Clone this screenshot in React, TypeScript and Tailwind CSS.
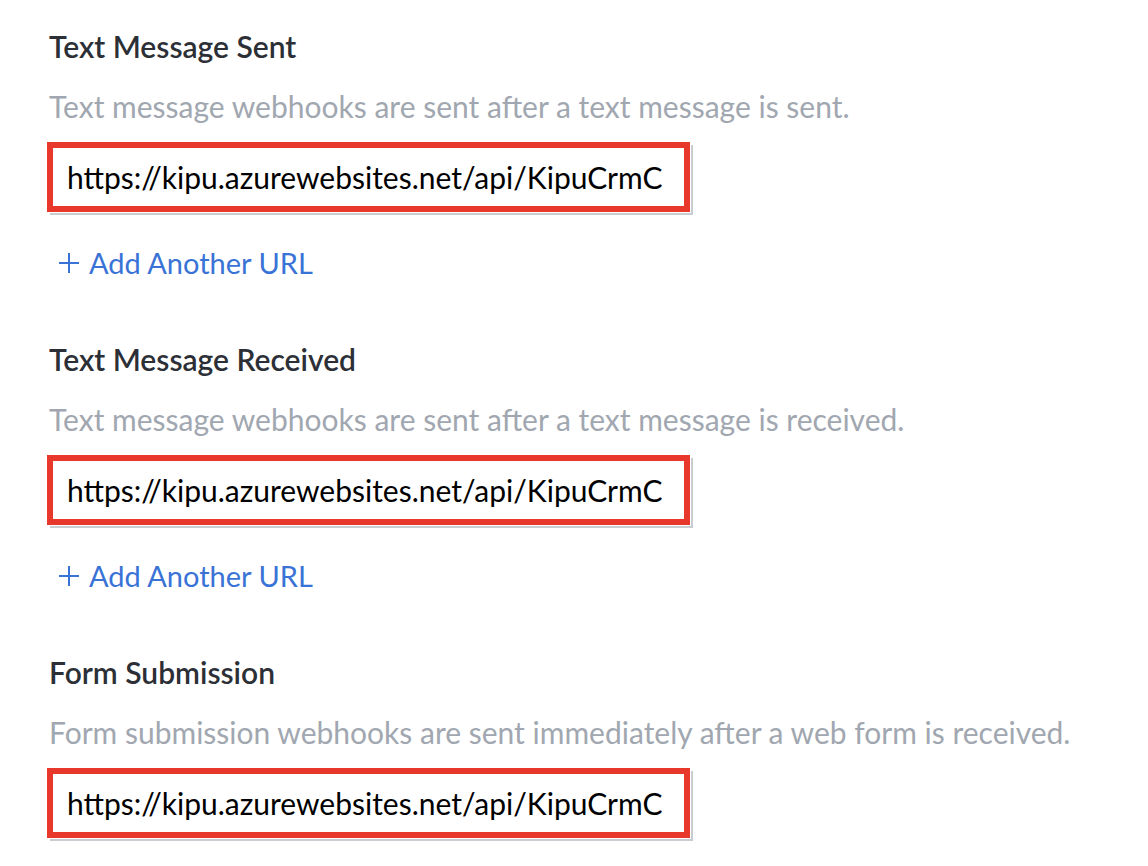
const sections = [
  {
    title: "Text Message Sent",
    description: "Text message webhooks are sent after a text message is sent.",
    addLink: true,
  },
  {
    title: "Text Message Received",
    description: "Text message webhooks are sent after a text message is received.",
    addLink: true,
  },
  {
    title: "Form Submission",
    description: "Form submission webhooks are sent immediately after a web form is received.",
    addLink: false,
  },
];

function PlusIcon() {
  return (
    <svg width="22" height="22" viewBox="0 0 22 22" className="shrink-0">
      <path d="M11 1v20M1 11h20" stroke="#3a73d6" strokeWidth="2" fill="none" />
    </svg>
  );
}

export default function App() {
  return (
    <div
      className="min-h-[866px] w-[1148px] bg-white pl-[49px] pt-[29px]"
      style={{ fontFamily: "Lato, 'Open Sans', sans-serif" }}
    >
      {sections.map((s, i) => (
        <section key={s.title} className={i > 0 ? "mt-[61px]" : ""}>
          <h2 className="text-[30px] leading-[34px] font-semibold text-[#2c2f36]">{s.title}</h2>
          <p className="mt-[25px] text-[30px] leading-[36px] text-[#a1a7b0]">{s.description}</p>
          <div className="relative mt-[18px] -ml-[2px] w-[643px]">
            <div className="absolute left-[3px] top-[3px] h-[70px] w-[643px] border-b-2 border-r-2 border-[#c9ccd1]" />
            <div className="relative flex h-[70px] w-[643px] items-center overflow-hidden border-[6px] border-[#e8382b] bg-white pl-[14px] pr-[14px]">
              <span className="overflow-hidden whitespace-nowrap text-[30px] text-black">
                https://kipu.azurewebsites.net/api/KipuCrmC
              </span>
            </div>
          </div>
          {s.addLink && (
            <a href="#" className="mt-[33px] ml-[9px] flex items-center gap-[9px] text-[29px] leading-[36px] text-[#3a73d6]">
              <PlusIcon />
              Add Another URL
            </a>
          )}
        </section>
      ))}
    </div>
  );
}
